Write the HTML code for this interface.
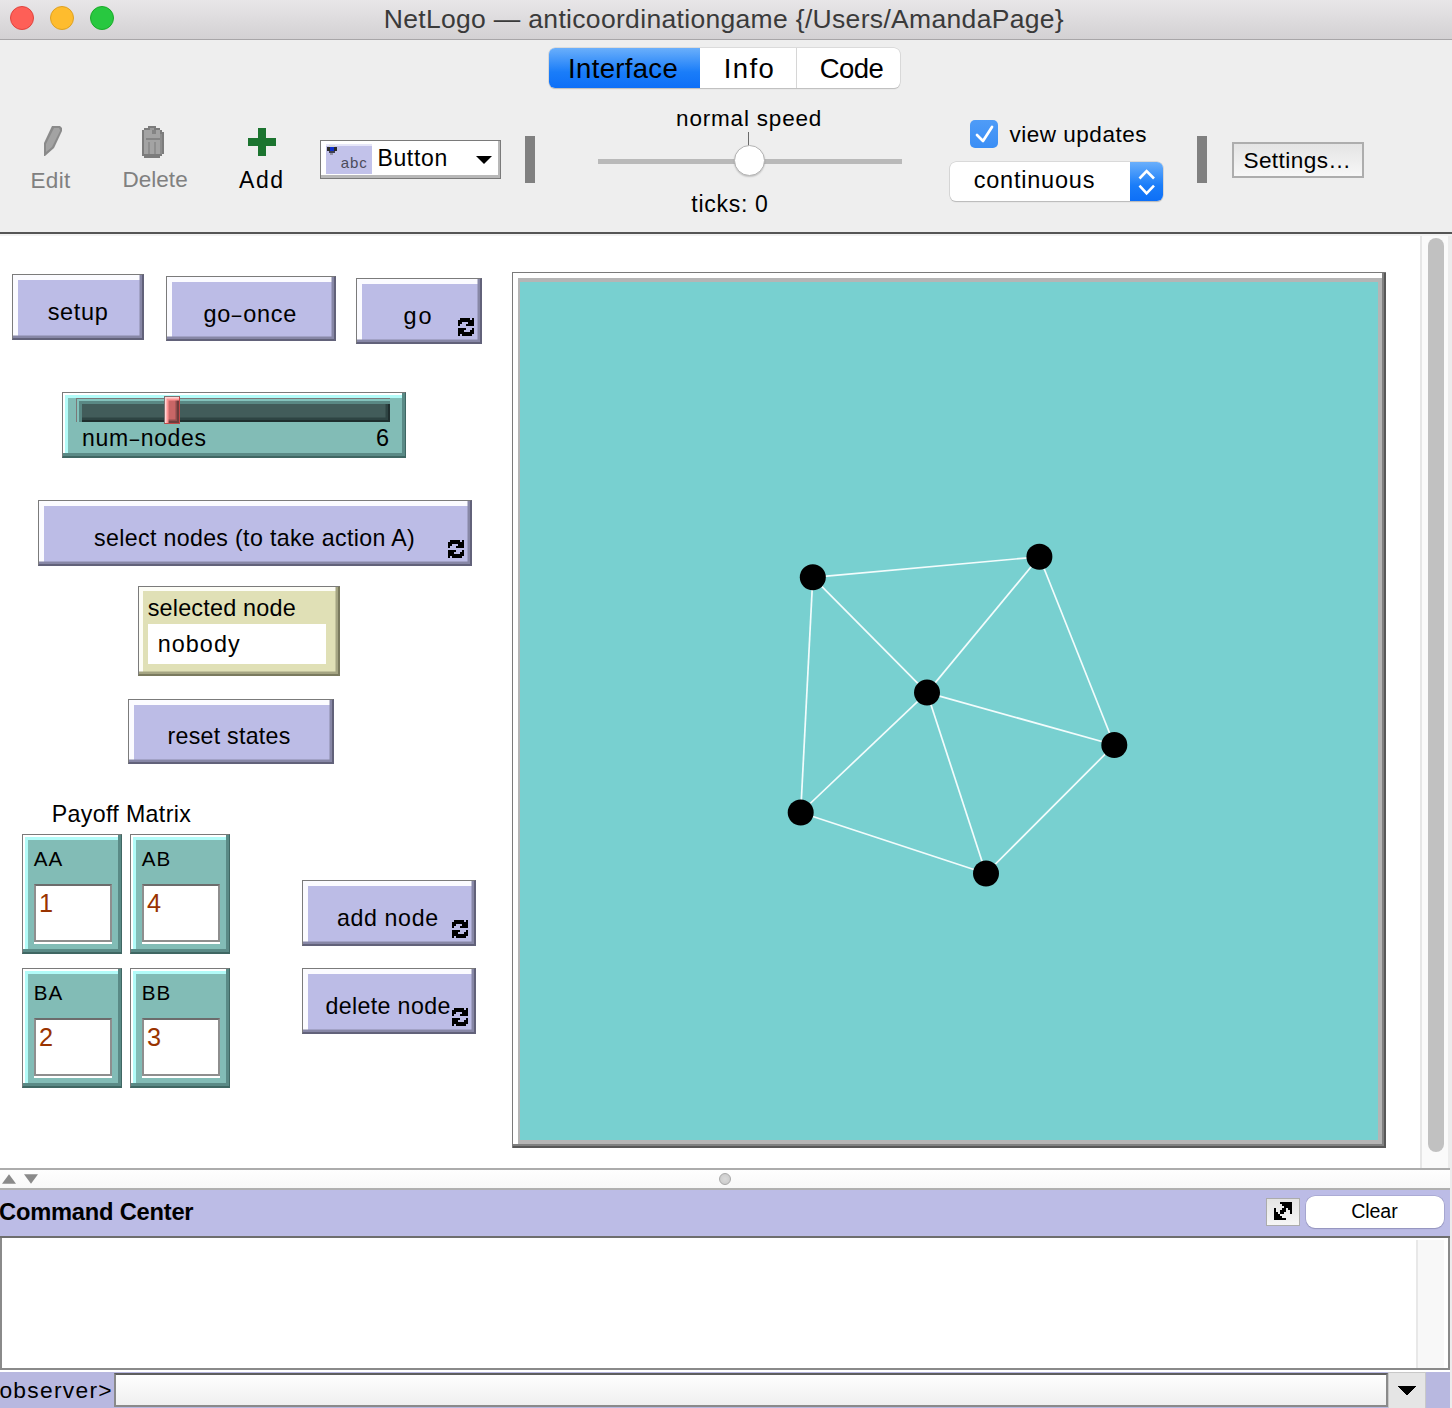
<!DOCTYPE html>
<html><head><meta charset="utf-8"><title>NetLogo</title>
<style>
html,body{margin:0;padding:0;}
body{width:1452px;height:1408px;position:relative;overflow:hidden;background:#fff;font-family:"Liberation Sans", sans-serif;}
.t{position:absolute;line-height:1;white-space:pre;}
</style></head><body>

<div style="position:absolute;left:0px;top:0px;width:1452px;height:39px;background:linear-gradient(#e8e6e8,#d3d1d3);"></div>
<div style="position:absolute;left:0px;top:39px;width:1452px;height:1px;background:#a8a6a8;"></div>
<div style="position:absolute;left:10px;top:6px;width:22px;height:22px;border-radius:50%;background:#fe5f57;border:1px solid #e0443e;"></div>
<div style="position:absolute;left:50px;top:6px;width:22px;height:22px;border-radius:50%;background:#febc2e;border:1px solid #dea123;"></div>
<div style="position:absolute;left:90px;top:6px;width:22px;height:22px;border-radius:50%;background:#28c840;border:1px solid #1aab29;"></div>
<div class="t" style="left:383.70px;top:5.76px;font-size:26.5px;color:#3a3a3a;font-weight:normal;letter-spacing:0.319px;">NetLogo — anticoordinationgame {/Users/AmandaPage}</div>
<div style="position:absolute;left:0px;top:40px;width:1452px;height:192px;background:#eeeeee;"></div>
<div style="position:absolute;left:0px;top:232px;width:1452px;height:2px;background:#555555;"></div>
<div style="position:absolute;left:0px;top:234px;width:1452px;height:2px;background:#f2f2f2;"></div>
<div style="position:absolute;left:549px;top:48px;width:351px;height:40px;border-radius:6px;background:#fff;box-shadow:0 0 0 0.5px #c8c8c8, 0 1px 1px #b4b4b4;overflow:hidden;"><div style="position:absolute;left:0;top:0;width:151px;height:40px;background:linear-gradient(#6aaffb,#1a7df9 60%,#0d6ff7);"></div><div style="position:absolute;left:247px;top:0;width:1px;height:40px;background:#d6d6d6;"></div></div>
<div class="t" style="left:568.10px;top:55.22px;font-size:27.5px;color:#000;font-weight:normal;letter-spacing:0.325px;">Interface</div>
<div class="t" style="left:723.70px;top:55.32px;font-size:27.5px;color:#000;font-weight:normal;letter-spacing:1.377px;">Info</div>
<div class="t" style="left:819.70px;top:55.32px;font-size:27.5px;color:#000;font-weight:normal;letter-spacing:-0.517px;">Code</div>
<svg style="position:absolute;left:0;top:0" width="300" height="240"><polygon points="52,126 60,126 62,128 62,131 54,148 45,156 44,156 44,143" fill="#8a8a8a"/><polygon points="54,128 59,128 60,130 60,131 52,147 46,152 46,144" fill="#a3a3a3"/></svg>
<svg style="position:absolute;left:0;top:0" width="200" height="200" shape-rendering="crispEdges"><g fill="#7c7c7c"><rect x="148" y="126" width="8" height="2"/><rect x="144" y="128" width="16" height="2"/><rect x="142" y="130" width="20" height="2"/><rect x="142" y="132" width="22" height="22"/><rect x="142" y="154" width="20" height="2"/><rect x="144" y="156" width="16" height="2"/></g><rect x="144" y="130" width="16" height="24" fill="#a3a3a3"/><rect x="150" y="128" width="4" height="2" fill="#9a9a9a"/><rect x="152" y="130" width="4" height="4" fill="#848484"/><rect x="146" y="138" width="14" height="2" fill="#858585"/><rect x="160" y="134" width="2" height="20" fill="#8c8c8c"/><rect x="148" y="142" width="2" height="12" fill="#8e8e8e"/><rect x="154" y="142" width="2" height="12" fill="#8e8e8e"/><rect x="146" y="154" width="14" height="2" fill="#7c7c7c"/></svg>
<div style="position:absolute;left:258px;top:128px;width:8px;height:28px;background:#1b742f;"></div>
<div style="position:absolute;left:248px;top:138px;width:28px;height:8px;background:#1b742f;"></div>
<div class="t" style="left:30.40px;top:169.65px;font-size:22.5px;color:#808080;font-weight:normal;letter-spacing:0.378px;">Edit</div>
<div class="t" style="left:122.40px;top:169.15px;font-size:22.5px;color:#808080;font-weight:normal;letter-spacing:0.050px;">Delete</div>
<div class="t" style="left:239.10px;top:168.73px;font-size:23px;color:#000;font-weight:normal;letter-spacing:1.492px;">Add</div>
<div style="position:absolute;left:320px;top:140px;width:181px;height:39px;box-sizing:border-box;border:1px solid #7a7a7a;background:#fff;box-shadow:inset -2px -3px 0 #b8b8b8;"></div>
<div style="position:absolute;left:326px;top:146px;width:46px;height:28px;background:#c2c2ea;"></div>
<div style="position:absolute;left:326px;top:144px;width:46px;height:2px;background:#e6e6f8;"></div>
<div class="t" style="left:340.70px;top:155.00px;font-size:15px;color:#4c4c5c;font-weight:normal;letter-spacing:0.910px;">abc</div>
<svg style="position:absolute;left:327px;top:145px" width="12" height="10" shape-rendering="crispEdges"><rect x="2" y="0" width="6" height="2" fill="#d8d8d8"/><rect x="0" y="2" width="10" height="4" fill="#2a2a2a"/><rect x="3" y="2" width="4" height="4" fill="#1030d0"/><rect x="2" y="6" width="6" height="2" fill="#404050"/><rect x="3" y="8" width="3" height="2" fill="#9090a8"/></svg>
<div class="t" style="left:377.40px;top:147.23px;font-size:23px;color:#000;font-weight:normal;letter-spacing:0.661px;">Button</div>
<svg style="position:absolute;left:474px;top:154px" width="20" height="12"><polygon points="2,2 18,2 10,10" fill="#000"/></svg>
<div style="position:absolute;left:525px;top:136px;width:10px;height:47px;background:#808080;"></div>
<div style="position:absolute;left:1197px;top:136px;width:10px;height:47px;background:#808080;"></div>
<div class="t" style="left:676.10px;top:107.85px;font-size:22.5px;color:#000;font-weight:normal;letter-spacing:0.807px;">normal speed</div>
<div style="position:absolute;left:598px;top:158.5px;width:304px;height:5px;background:#b9b9b9;"></div>
<div style="position:absolute;left:747.5px;top:132px;width:1.5px;height:14px;background:#6a6a6a;"></div>
<div style="position:absolute;left:733.5px;top:145px;width:31px;height:31px;box-sizing:border-box;border-radius:50%;background:#fff;border:1px solid #b4b4b4;box-shadow:0 1px 1.5px rgba(0,0,0,0.18);"></div>
<div class="t" style="left:691.30px;top:192.83px;font-size:23px;color:#000;font-weight:normal;letter-spacing:0.718px;">ticks: 0</div>
<div style="position:absolute;left:970px;top:120px;width:28px;height:28px;border-radius:5px;background:linear-gradient(#4f9cf7,#3a8ef5);"></div>
<svg style="position:absolute;left:970px;top:120px" width="28" height="28"><polyline points="7,15 13,21 22,7" fill="none" stroke="#fff" stroke-width="2.7" stroke-linecap="round" stroke-linejoin="round"/></svg>
<div class="t" style="left:1009.40px;top:124.25px;font-size:22.5px;color:#000;font-weight:normal;letter-spacing:0.524px;">view updates</div>
<div style="position:absolute;left:950px;top:161.5px;width:213px;height:39px;border-radius:6px;background:#fff;box-shadow:0 0 0 0.5px #c4c4c4, 0 1px 1px #b0b0b0;overflow:hidden;"><div style="position:absolute;left:180px;top:0;width:33px;height:39px;background:linear-gradient(#6aaffb,#1a7df9 60%,#0d6ff7);"></div></div>
<svg style="position:absolute;left:1130px;top:161.5px" width="33" height="39"><polyline points="9.5,16.5 16.6,9 24,16.5" fill="none" stroke="#fff" stroke-width="2.6"/><polyline points="9.5,23.7 16.6,31.3 24,23.7" fill="none" stroke="#fff" stroke-width="2.6"/></svg>
<div class="t" style="left:973.70px;top:169.30px;font-size:23.5px;color:#000;font-weight:normal;letter-spacing:0.781px;">continuous</div>
<div style="position:absolute;left:1232px;top:142px;width:132px;height:36px;box-sizing:border-box;border:2px solid #adadad;background:linear-gradient(#e4e4e4,#f7f7f7);"></div>
<div class="t" style="left:1243.40px;top:150.16px;font-size:22.6px;color:#000;font-weight:normal;letter-spacing:0.418px;">Settings…</div>
<div style="position:absolute;left:0px;top:236px;width:1420px;height:933px;background:#fff;"></div>
<div style="position:absolute;left:1420px;top:236px;width:2px;height:933px;background:#e6e6e6;"></div>
<div style="position:absolute;left:1422px;top:236px;width:26px;height:933px;background:#fafafa;"></div>
<div style="position:absolute;left:1448px;top:236px;width:4px;height:933px;background:#ececec;"></div>
<div style="position:absolute;left:1428px;top:238px;width:16px;height:914px;background:#c1c1c1;border-radius:8px;"></div>
<div style="position:absolute;left:12px;top:274px;width:132px;height:66px;box-sizing:border-box;background:#bcbce6;border-style:solid;border-width:1.5px 2px 2px 1.5px;border-color:#7b7b7b #62627a #62627a #7b7b7b;box-shadow:inset -2.5px -2.5px 0 #8787a6, inset 5px 5px 0 #fbfbff;"></div>
<div class="t" style="left:47.70px;top:301.30px;font-size:23.5px;color:#000;font-weight:normal;letter-spacing:0.630px;">setup</div>
<div style="position:absolute;left:166px;top:276px;width:170px;height:65px;box-sizing:border-box;background:#bcbce6;border-style:solid;border-width:1.5px 2px 2px 1.5px;border-color:#7b7b7b #62627a #62627a #7b7b7b;box-shadow:inset -2.5px -2.5px 0 #8787a6, inset 5px 5px 0 #fbfbff;"></div>
<div class="t" style="left:203.50px;top:302.70px;font-size:23.5px;color:#000;font-weight:normal;letter-spacing:0.712px;">go<span style="display:inline-block;transform:scaleX(0.73);margin:0 -0.8px;">–</span>once</div>
<div style="position:absolute;left:356px;top:278px;width:126px;height:65.5px;box-sizing:border-box;background:#bcbce6;border-style:solid;border-width:1.5px 2px 2px 1.5px;border-color:#7b7b7b #62627a #62627a #7b7b7b;box-shadow:inset -2.5px -2.5px 0 #8787a6, inset 5px 5px 0 #fbfbff;"></div>
<div class="t" style="left:403.50px;top:305.20px;font-size:23.5px;color:#000;font-weight:normal;letter-spacing:1.968px;">go</div>
<svg style="position:absolute;left:458px;top:318px" width="16" height="18" shape-rendering="crispEdges" fill="#000"><rect x="2" y="0" width="2" height="2"/><rect x="4" y="0" width="2" height="2"/><rect x="6" y="0" width="2" height="2"/><rect x="8" y="0" width="2" height="2"/><rect x="10" y="0" width="2" height="2"/><rect x="14" y="0" width="2" height="2"/><rect x="0" y="2" width="2" height="2"/><rect x="2" y="2" width="2" height="2"/><rect x="4" y="2" width="2" height="2"/><rect x="6" y="2" width="2" height="2"/><rect x="8" y="2" width="2" height="2"/><rect x="10" y="2" width="2" height="2"/><rect x="12" y="2" width="2" height="2"/><rect x="14" y="2" width="2" height="2"/><rect x="0" y="4" width="2" height="2"/><rect x="2" y="4" width="2" height="2"/><rect x="10" y="4" width="2" height="2"/><rect x="12" y="4" width="2" height="2"/><rect x="14" y="4" width="2" height="2"/><rect x="0" y="6" width="2" height="2"/><rect x="8" y="6" width="2" height="2"/><rect x="10" y="6" width="2" height="2"/><rect x="12" y="6" width="2" height="2"/><rect x="14" y="6" width="2" height="2"/><rect x="0" y="10" width="2" height="2"/><rect x="2" y="10" width="2" height="2"/><rect x="4" y="10" width="2" height="2"/><rect x="6" y="10" width="2" height="2"/><rect x="14" y="10" width="2" height="2"/><rect x="0" y="12" width="2" height="2"/><rect x="2" y="12" width="2" height="2"/><rect x="4" y="12" width="2" height="2"/><rect x="12" y="12" width="2" height="2"/><rect x="14" y="12" width="2" height="2"/><rect x="0" y="14" width="2" height="2"/><rect x="2" y="14" width="2" height="2"/><rect x="4" y="14" width="2" height="2"/><rect x="6" y="14" width="2" height="2"/><rect x="8" y="14" width="2" height="2"/><rect x="10" y="14" width="2" height="2"/><rect x="12" y="14" width="2" height="2"/><rect x="14" y="14" width="2" height="2"/><rect x="0" y="16" width="2" height="2"/><rect x="4" y="16" width="2" height="2"/><rect x="6" y="16" width="2" height="2"/><rect x="8" y="16" width="2" height="2"/><rect x="10" y="16" width="2" height="2"/><rect x="12" y="16" width="2" height="2"/></svg>
<div style="position:absolute;left:62px;top:392px;width:344px;height:66px;box-sizing:border-box;background:#82bcb6;border-style:solid;border-width:1.5px 1.5px 2px 1.5px;border-color:#7a7a7a #3f6763 #3f6763 #7a7a7a;box-shadow:inset -3px -3px 0 #5a8a86, inset 2px 2px 0 #ffffff, inset 5px 5px 0 #b2fbf8;"></div>
<div style="position:absolute;left:76px;top:398px;width:314px;height:24px;box-sizing:border-box;background:#425c5a;border-style:solid;border-width:1px 0 0 1px;border-color:#7c7878;box-shadow:inset 2px 2px 0 #84c2bc, inset 5px 5px 0 #5a8884, inset -2px -2px 0 #1f2e2e, inset -4.5px -4.5px 0 #2e4443;"></div>
<div style="position:absolute;left:164px;top:396px;width:16px;height:28px;box-sizing:border-box;background:#c86666;border-style:solid;border-width:1px 1px 1px 1px;border-color:#7e7070 #c04848 #c04848 #7e7070;box-shadow:inset 1.5px 1.5px 0 #ffd4d4, inset 3.5px 3.5px 0 #ff9494, inset -2px -2px 0 #6e3c3c, inset -3.5px -3.5px 0 #8e4c4c;"></div>
<div class="t" style="left:82.10px;top:426.83px;font-size:23px;color:#000;font-weight:normal;letter-spacing:0.664px;">num<span style="display:inline-block;transform:scaleX(0.73);margin:0 -0.8px;">–</span>nodes</div>
<div class="t" style="left:376.10px;top:426.80px;font-size:23.5px;color:#000;font-weight:normal;letter-spacing:0.000px;">6</div>
<div style="position:absolute;left:38px;top:500px;width:434px;height:66px;box-sizing:border-box;background:#bcbce6;border-style:solid;border-width:1.5px 2px 2px 1.5px;border-color:#7b7b7b #62627a #62627a #7b7b7b;box-shadow:inset -2.5px -2.5px 0 #8787a6, inset 5px 5px 0 #fbfbff;"></div>
<div class="t" style="left:94.10px;top:527.16px;font-size:23.2px;color:#000;font-weight:normal;letter-spacing:0.333px;">select nodes (to take action A)</div>
<svg style="position:absolute;left:448px;top:540px" width="16" height="18" shape-rendering="crispEdges" fill="#000"><rect x="2" y="0" width="2" height="2"/><rect x="4" y="0" width="2" height="2"/><rect x="6" y="0" width="2" height="2"/><rect x="8" y="0" width="2" height="2"/><rect x="10" y="0" width="2" height="2"/><rect x="14" y="0" width="2" height="2"/><rect x="0" y="2" width="2" height="2"/><rect x="2" y="2" width="2" height="2"/><rect x="4" y="2" width="2" height="2"/><rect x="6" y="2" width="2" height="2"/><rect x="8" y="2" width="2" height="2"/><rect x="10" y="2" width="2" height="2"/><rect x="12" y="2" width="2" height="2"/><rect x="14" y="2" width="2" height="2"/><rect x="0" y="4" width="2" height="2"/><rect x="2" y="4" width="2" height="2"/><rect x="10" y="4" width="2" height="2"/><rect x="12" y="4" width="2" height="2"/><rect x="14" y="4" width="2" height="2"/><rect x="0" y="6" width="2" height="2"/><rect x="8" y="6" width="2" height="2"/><rect x="10" y="6" width="2" height="2"/><rect x="12" y="6" width="2" height="2"/><rect x="14" y="6" width="2" height="2"/><rect x="0" y="10" width="2" height="2"/><rect x="2" y="10" width="2" height="2"/><rect x="4" y="10" width="2" height="2"/><rect x="6" y="10" width="2" height="2"/><rect x="14" y="10" width="2" height="2"/><rect x="0" y="12" width="2" height="2"/><rect x="2" y="12" width="2" height="2"/><rect x="4" y="12" width="2" height="2"/><rect x="12" y="12" width="2" height="2"/><rect x="14" y="12" width="2" height="2"/><rect x="0" y="14" width="2" height="2"/><rect x="2" y="14" width="2" height="2"/><rect x="4" y="14" width="2" height="2"/><rect x="6" y="14" width="2" height="2"/><rect x="8" y="14" width="2" height="2"/><rect x="10" y="14" width="2" height="2"/><rect x="12" y="14" width="2" height="2"/><rect x="14" y="14" width="2" height="2"/><rect x="0" y="16" width="2" height="2"/><rect x="4" y="16" width="2" height="2"/><rect x="6" y="16" width="2" height="2"/><rect x="8" y="16" width="2" height="2"/><rect x="10" y="16" width="2" height="2"/><rect x="12" y="16" width="2" height="2"/></svg>
<div style="position:absolute;left:138px;top:586px;width:202px;height:90px;box-sizing:border-box;background:#e0e0b6;border-style:solid;border-width:1.5px 2px 2px 1.5px;border-color:#7b7b7b #7a7a5e #7a7a5e #7b7b7b;box-shadow:inset -2.5px -2.5px 0 #a4a482, inset 4px 4px 0 #fdfdf6;"></div>
<div style="position:absolute;left:148px;top:624px;width:178px;height:40px;background:#fff;"></div>
<div class="t" style="left:147.70px;top:597.39px;font-size:23.4px;color:#000;font-weight:normal;letter-spacing:0.191px;">selected node</div>
<div class="t" style="left:157.70px;top:633.49px;font-size:23.4px;color:#000;font-weight:normal;letter-spacing:1.045px;">nobody</div>
<div style="position:absolute;left:128px;top:699px;width:206px;height:65px;box-sizing:border-box;background:#bcbce6;border-style:solid;border-width:1.5px 2px 2px 1.5px;border-color:#7b7b7b #62627a #62627a #7b7b7b;box-shadow:inset -2.5px -2.5px 0 #8787a6, inset 5px 5px 0 #fbfbff;"></div>
<div class="t" style="left:167.60px;top:725.06px;font-size:23.2px;color:#000;font-weight:normal;letter-spacing:0.253px;">reset states</div>
<div class="t" style="left:51.70px;top:803.46px;font-size:23.2px;color:#000;font-weight:normal;letter-spacing:0.354px;">Payoff Matrix</div>
<div style="position:absolute;left:22px;top:834px;width:100px;height:120px;box-sizing:border-box;background:#82bcb6;border-style:solid;border-width:1.5px 1.5px 2px 1.5px;border-color:#7a7a7a #3f6763 #3f6763 #7a7a7a;box-shadow:inset -3px -3px 0 #5a8a86, inset 2px 2px 0 #ffffff, inset 5px 5px 0 #b2fbf8;"></div>
<div class="t" style="left:33.70px;top:849.06px;font-size:20.6px;color:#000;font-weight:normal;letter-spacing:1.120px;">AA</div>
<div style="position:absolute;left:34px;top:884px;width:78px;height:58px;box-sizing:border-box;background:#fff;border-style:solid;border-width:2px 2px 2px 2px;border-color:#6c6c6c #8e8e8e #8e8e8e #8e8e8e;"></div>
<div style="position:absolute;left:34px;top:942px;width:78px;height:2px;background:#fff;"></div>
<div class="t" style="left:38.90px;top:891.28px;font-size:25.3px;color:#993300;font-weight:normal;letter-spacing:0.000px;">1</div>
<div style="position:absolute;left:130px;top:834px;width:100px;height:120px;box-sizing:border-box;background:#82bcb6;border-style:solid;border-width:1.5px 1.5px 2px 1.5px;border-color:#7a7a7a #3f6763 #3f6763 #7a7a7a;box-shadow:inset -3px -3px 0 #5a8a86, inset 2px 2px 0 #ffffff, inset 5px 5px 0 #b2fbf8;"></div>
<div class="t" style="left:141.70px;top:849.06px;font-size:20.6px;color:#000;font-weight:normal;letter-spacing:1.120px;">AB</div>
<div style="position:absolute;left:142px;top:884px;width:78px;height:58px;box-sizing:border-box;background:#fff;border-style:solid;border-width:2px 2px 2px 2px;border-color:#6c6c6c #8e8e8e #8e8e8e #8e8e8e;"></div>
<div style="position:absolute;left:142px;top:942px;width:78px;height:2px;background:#fff;"></div>
<div class="t" style="left:146.90px;top:891.28px;font-size:25.3px;color:#993300;font-weight:normal;letter-spacing:0.000px;">4</div>
<div style="position:absolute;left:22px;top:968px;width:100px;height:120px;box-sizing:border-box;background:#82bcb6;border-style:solid;border-width:1.5px 1.5px 2px 1.5px;border-color:#7a7a7a #3f6763 #3f6763 #7a7a7a;box-shadow:inset -3px -3px 0 #5a8a86, inset 2px 2px 0 #ffffff, inset 5px 5px 0 #b2fbf8;"></div>
<div class="t" style="left:33.70px;top:983.06px;font-size:20.6px;color:#000;font-weight:normal;letter-spacing:1.120px;">BA</div>
<div style="position:absolute;left:34px;top:1018px;width:78px;height:58px;box-sizing:border-box;background:#fff;border-style:solid;border-width:2px 2px 2px 2px;border-color:#6c6c6c #8e8e8e #8e8e8e #8e8e8e;"></div>
<div style="position:absolute;left:34px;top:1076px;width:78px;height:2px;background:#fff;"></div>
<div class="t" style="left:38.90px;top:1025.28px;font-size:25.3px;color:#993300;font-weight:normal;letter-spacing:0.000px;">2</div>
<div style="position:absolute;left:130px;top:968px;width:100px;height:120px;box-sizing:border-box;background:#82bcb6;border-style:solid;border-width:1.5px 1.5px 2px 1.5px;border-color:#7a7a7a #3f6763 #3f6763 #7a7a7a;box-shadow:inset -3px -3px 0 #5a8a86, inset 2px 2px 0 #ffffff, inset 5px 5px 0 #b2fbf8;"></div>
<div class="t" style="left:141.70px;top:983.06px;font-size:20.6px;color:#000;font-weight:normal;letter-spacing:1.120px;">BB</div>
<div style="position:absolute;left:142px;top:1018px;width:78px;height:58px;box-sizing:border-box;background:#fff;border-style:solid;border-width:2px 2px 2px 2px;border-color:#6c6c6c #8e8e8e #8e8e8e #8e8e8e;"></div>
<div style="position:absolute;left:142px;top:1076px;width:78px;height:2px;background:#fff;"></div>
<div class="t" style="left:146.90px;top:1025.28px;font-size:25.3px;color:#993300;font-weight:normal;letter-spacing:0.000px;">3</div>
<div style="position:absolute;left:302px;top:880px;width:174px;height:66px;box-sizing:border-box;background:#bcbce6;border-style:solid;border-width:1.5px 2px 2px 1.5px;border-color:#7b7b7b #62627a #62627a #7b7b7b;box-shadow:inset -2.5px -2.5px 0 #8787a6, inset 5px 5px 0 #fbfbff;"></div>
<div class="t" style="left:337.00px;top:906.56px;font-size:23.2px;color:#000;font-weight:normal;letter-spacing:0.619px;">add node</div>
<svg style="position:absolute;left:452px;top:920px" width="16" height="18" shape-rendering="crispEdges" fill="#000"><rect x="2" y="0" width="2" height="2"/><rect x="4" y="0" width="2" height="2"/><rect x="6" y="0" width="2" height="2"/><rect x="8" y="0" width="2" height="2"/><rect x="10" y="0" width="2" height="2"/><rect x="14" y="0" width="2" height="2"/><rect x="0" y="2" width="2" height="2"/><rect x="2" y="2" width="2" height="2"/><rect x="4" y="2" width="2" height="2"/><rect x="6" y="2" width="2" height="2"/><rect x="8" y="2" width="2" height="2"/><rect x="10" y="2" width="2" height="2"/><rect x="12" y="2" width="2" height="2"/><rect x="14" y="2" width="2" height="2"/><rect x="0" y="4" width="2" height="2"/><rect x="2" y="4" width="2" height="2"/><rect x="10" y="4" width="2" height="2"/><rect x="12" y="4" width="2" height="2"/><rect x="14" y="4" width="2" height="2"/><rect x="0" y="6" width="2" height="2"/><rect x="8" y="6" width="2" height="2"/><rect x="10" y="6" width="2" height="2"/><rect x="12" y="6" width="2" height="2"/><rect x="14" y="6" width="2" height="2"/><rect x="0" y="10" width="2" height="2"/><rect x="2" y="10" width="2" height="2"/><rect x="4" y="10" width="2" height="2"/><rect x="6" y="10" width="2" height="2"/><rect x="14" y="10" width="2" height="2"/><rect x="0" y="12" width="2" height="2"/><rect x="2" y="12" width="2" height="2"/><rect x="4" y="12" width="2" height="2"/><rect x="12" y="12" width="2" height="2"/><rect x="14" y="12" width="2" height="2"/><rect x="0" y="14" width="2" height="2"/><rect x="2" y="14" width="2" height="2"/><rect x="4" y="14" width="2" height="2"/><rect x="6" y="14" width="2" height="2"/><rect x="8" y="14" width="2" height="2"/><rect x="10" y="14" width="2" height="2"/><rect x="12" y="14" width="2" height="2"/><rect x="14" y="14" width="2" height="2"/><rect x="0" y="16" width="2" height="2"/><rect x="4" y="16" width="2" height="2"/><rect x="6" y="16" width="2" height="2"/><rect x="8" y="16" width="2" height="2"/><rect x="10" y="16" width="2" height="2"/><rect x="12" y="16" width="2" height="2"/></svg>
<div style="position:absolute;left:302px;top:968px;width:174px;height:66px;box-sizing:border-box;background:#bcbce6;border-style:solid;border-width:1.5px 2px 2px 1.5px;border-color:#7b7b7b #62627a #62627a #7b7b7b;box-shadow:inset -2.5px -2.5px 0 #8787a6, inset 5px 5px 0 #fbfbff;"></div>
<div class="t" style="left:325.40px;top:995.06px;font-size:23.2px;color:#000;font-weight:normal;letter-spacing:0.373px;">delete node</div>
<svg style="position:absolute;left:452px;top:1008px" width="16" height="18" shape-rendering="crispEdges" fill="#000"><rect x="2" y="0" width="2" height="2"/><rect x="4" y="0" width="2" height="2"/><rect x="6" y="0" width="2" height="2"/><rect x="8" y="0" width="2" height="2"/><rect x="10" y="0" width="2" height="2"/><rect x="14" y="0" width="2" height="2"/><rect x="0" y="2" width="2" height="2"/><rect x="2" y="2" width="2" height="2"/><rect x="4" y="2" width="2" height="2"/><rect x="6" y="2" width="2" height="2"/><rect x="8" y="2" width="2" height="2"/><rect x="10" y="2" width="2" height="2"/><rect x="12" y="2" width="2" height="2"/><rect x="14" y="2" width="2" height="2"/><rect x="0" y="4" width="2" height="2"/><rect x="2" y="4" width="2" height="2"/><rect x="10" y="4" width="2" height="2"/><rect x="12" y="4" width="2" height="2"/><rect x="14" y="4" width="2" height="2"/><rect x="0" y="6" width="2" height="2"/><rect x="8" y="6" width="2" height="2"/><rect x="10" y="6" width="2" height="2"/><rect x="12" y="6" width="2" height="2"/><rect x="14" y="6" width="2" height="2"/><rect x="0" y="10" width="2" height="2"/><rect x="2" y="10" width="2" height="2"/><rect x="4" y="10" width="2" height="2"/><rect x="6" y="10" width="2" height="2"/><rect x="14" y="10" width="2" height="2"/><rect x="0" y="12" width="2" height="2"/><rect x="2" y="12" width="2" height="2"/><rect x="4" y="12" width="2" height="2"/><rect x="12" y="12" width="2" height="2"/><rect x="14" y="12" width="2" height="2"/><rect x="0" y="14" width="2" height="2"/><rect x="2" y="14" width="2" height="2"/><rect x="4" y="14" width="2" height="2"/><rect x="6" y="14" width="2" height="2"/><rect x="8" y="14" width="2" height="2"/><rect x="10" y="14" width="2" height="2"/><rect x="12" y="14" width="2" height="2"/><rect x="14" y="14" width="2" height="2"/><rect x="0" y="16" width="2" height="2"/><rect x="4" y="16" width="2" height="2"/><rect x="6" y="16" width="2" height="2"/><rect x="8" y="16" width="2" height="2"/><rect x="10" y="16" width="2" height="2"/><rect x="12" y="16" width="2" height="2"/></svg>
<div style="position:absolute;left:512px;top:272px;width:874px;height:876px;background:#585858;"></div>
<div style="position:absolute;left:512px;top:272px;width:874px;height:1px;background:#7a7a7a;"></div>
<div style="position:absolute;left:512px;top:272px;width:1px;height:876px;background:#7a7a7a;"></div>
<div style="position:absolute;left:513px;top:273px;width:871px;height:873px;background:#808080;"></div>
<div style="position:absolute;left:513px;top:273px;width:869px;height:871px;background:#ffffff;"></div>
<div style="position:absolute;left:518px;top:278px;width:864px;height:866px;background:#b5b5b5;"></div>
<div style="position:absolute;left:520px;top:282px;width:858px;height:858px;background:#78d0d0;"></div>
<svg style="position:absolute;left:0;top:0" width="1452" height="1408"><line x1="812.8" y1="577.3" x2="1039.4" y2="556.8" stroke="#f2fcfc" stroke-width="1.7"/><line x1="812.8" y1="577.3" x2="927.0" y2="692.6" stroke="#f2fcfc" stroke-width="1.7"/><line x1="812.8" y1="577.3" x2="800.7" y2="812.5" stroke="#f2fcfc" stroke-width="1.7"/><line x1="1039.4" y1="556.8" x2="927.0" y2="692.6" stroke="#f2fcfc" stroke-width="1.7"/><line x1="1039.4" y1="556.8" x2="1114.3" y2="745.0" stroke="#f2fcfc" stroke-width="1.7"/><line x1="927.0" y1="692.6" x2="1114.3" y2="745.0" stroke="#f2fcfc" stroke-width="1.7"/><line x1="927.0" y1="692.6" x2="800.7" y2="812.5" stroke="#f2fcfc" stroke-width="1.7"/><line x1="927.0" y1="692.6" x2="986.0" y2="873.5" stroke="#f2fcfc" stroke-width="1.7"/><line x1="800.7" y1="812.5" x2="986.0" y2="873.5" stroke="#f2fcfc" stroke-width="1.7"/><line x1="1114.3" y1="745.0" x2="986.0" y2="873.5" stroke="#f2fcfc" stroke-width="1.7"/><circle cx="812.8" cy="577.3" r="13" fill="#000"/><circle cx="1039.4" cy="556.8" r="13" fill="#000"/><circle cx="927.0" cy="692.6" r="13" fill="#000"/><circle cx="1114.3" cy="745.0" r="13" fill="#000"/><circle cx="800.7" cy="812.5" r="13" fill="#000"/><circle cx="986.0" cy="873.5" r="13" fill="#000"/></svg>
<div style="position:absolute;left:0px;top:1168px;width:1452px;height:2px;background:#acacac;"></div>
<div style="position:absolute;left:0px;top:1170px;width:1452px;height:18px;background:linear-gradient(#fefefe,#f8f8f8);"></div>
<div style="position:absolute;left:0px;top:1188px;width:1452px;height:2px;background:#b0b0b0;"></div>
<svg style="position:absolute;left:0;top:1172px" width="44" height="14"><polygon points="2,11.7 9,2.3 16,11.7" fill="#8a8a8a"/><polygon points="24,2.3 38,2.3 31,11.7" fill="#8a8a8a"/></svg>
<div style="position:absolute;left:719px;top:1173px;width:10px;height:10px;border-radius:50%;background:radial-gradient(#dadada,#c8c8c8);border:1px solid #a8a8a8;"></div>
<div style="position:absolute;left:0px;top:1190px;width:1452px;height:46px;background:#bcbce6;"></div>
<div class="t" style="left:-1.00px;top:1200.63px;font-size:23.7px;color:#000;font-weight:bold;letter-spacing:-0.218px;">Command Center</div>
<div style="position:absolute;left:1266px;top:1198px;width:34px;height:28px;box-sizing:border-box;border:1.7px solid #acacac;background:linear-gradient(#e4e4e4,#f6f6f6);"></div>
<svg style="position:absolute;left:1266px;top:1198px" width="34" height="28" shape-rendering="crispEdges" fill="#000"><rect x="14" y="4" width="12" height="2"/><rect x="16" y="6" width="10" height="2"/><rect x="18" y="8" width="8" height="2"/><rect x="8" y="10" width="2" height="2"/><rect x="16" y="10" width="4" height="2"/><rect x="22" y="10" width="4" height="2"/><rect x="8" y="12" width="2" height="2"/><rect x="14" y="12" width="6" height="2"/><rect x="24" y="12" width="2" height="2"/><rect x="8" y="14" width="4" height="2"/><rect x="14" y="14" width="4" height="2"/><rect x="24" y="14" width="2" height="2"/><rect x="8" y="16" width="6" height="2"/><rect x="8" y="18" width="8" height="2"/><rect x="8" y="20" width="12" height="2"/></svg>
<div style="position:absolute;left:1306px;top:1196px;width:138px;height:32px;box-sizing:border-box;border-radius:9px;background:#fff;box-shadow:0 0 0 0.6px #9a9ac4, 0 1px 1px #9090b8;"></div>
<div class="t" style="left:1351.30px;top:1202.30px;font-size:19.6px;color:#000;font-weight:normal;letter-spacing:-0.111px;">Clear</div>
<div style="position:absolute;left:0px;top:1236px;width:1452px;height:2px;background:#6e6e6e;"></div>
<div style="position:absolute;left:0;top:1238px;width:1450px;height:132px;box-sizing:border-box;background:#fff;border-style:solid;border-width:0 2px 2px 2px;border-color:#8a8a8a;"></div>
<div style="position:absolute;left:1416px;top:1240px;width:2px;height:128px;background:#e8e8e8;"></div>
<div style="position:absolute;left:1418px;top:1240px;width:26px;height:128px;background:#f8f8f8;"></div>
<div style="position:absolute;left:1450px;top:1236px;width:2px;height:172px;background:#ececec;"></div>
<div style="position:absolute;left:0px;top:1370px;width:1450px;height:2px;background:#fff;"></div>
<div style="position:absolute;left:0px;top:1372px;width:1450px;height:36px;background:#b8b8e0;"></div>
<div class="t" style="left:-0.60px;top:1379.10px;font-size:22.8px;color:#000;font-weight:normal;letter-spacing:1.271px;">observer&gt;</div>
<div style="position:absolute;left:114px;top:1372.5px;width:274px;height:36px;"></div>
<div style="position:absolute;left:114px;top:1372.5px;width:1274px;height:34px;box-sizing:border-box;background:linear-gradient(#fefefe,#efefef);border-style:solid;border-width:2px 2px 2px 2px;border-color:#5e5e5e #8a8a8a #8a8a8a #8a8a8a;"></div>
<div style="position:absolute;left:1388px;top:1372px;width:38px;height:36px;box-sizing:border-box;background:#e5e5e5;border:1.7px solid #c8c8c8;border-bottom:none;"></div>
<svg style="position:absolute;left:1397px;top:1385px" width="20" height="12" shape-rendering="crispEdges"><polygon points="1,1 19,1 10,11" fill="#000"/></svg>
<div style="position:absolute;left:1450px;top:1168px;width:2px;height:240px;background:#ececec;"></div>
</body></html>
